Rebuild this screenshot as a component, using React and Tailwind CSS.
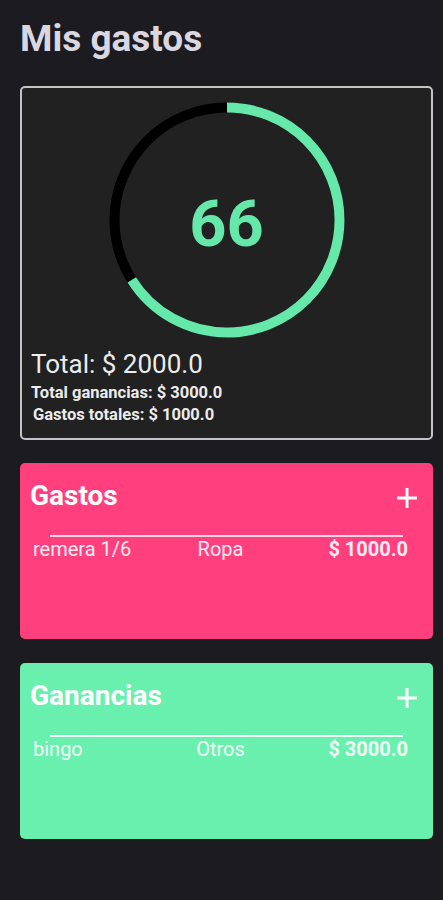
import React from "react";

const font = { fontFamily: "Roboto, 'Noto Sans', sans-serif" };

function Plus() {
  return (
    <svg width="22" height="22" viewBox="0 0 22 22" className="mt-[8px] shrink-0">
      <path d="M11 1 V21 M1 11 H21" stroke="white" strokeWidth="3" />
    </svg>
  );
}

function Ring({ value }) {
  const r = 112.5;
  const c = 2 * Math.PI * r;
  const len = (value / 100) * c;
  return (
    <div className="relative mx-auto w-[236px] h-[236px]">
      <svg width="236" height="236" viewBox="0 0 236 236">
        <circle cx="118" cy="118" r={r} fill="none" stroke="#000000" strokeWidth="10" />
        <circle
          cx="118"
          cy="118"
          r={r}
          fill="none"
          stroke="#65e8a9"
          strokeWidth="10"
          strokeDasharray={`${len} ${c}`}
          transform="rotate(-90 118 118)"
        />
      </svg>
      <div className="absolute inset-0 flex items-center justify-center">
        <span className="text-[65px] leading-none font-bold text-[#65e8a9] mt-[8px]">{value}</span>
      </div>
    </div>
  );
}

function ListCard({ title, bg, lineColor, items, className }) {
  return (
    <div className={`h-[176px] rounded-[5px] ${bg} ${className}`}>
      <div className="flex items-start justify-between pl-[10px] pr-[15px] pt-[16px]">
        <div className="text-[28px] leading-[33px] font-bold text-white">{title}</div>
        <Plus />
      </div>
      <div className={`mt-[23px] mx-[30px] h-[2px] ${lineColor}`} />
      {items.map((it, i) => (
        <div key={i} className="flex pl-[13px] pr-[25px] text-[20px] leading-[24px] text-white/90">
          <div className="flex-1 text-left">{it.name}</div>
          <div className="flex-1 text-center">{it.cat}</div>
          <div className="flex-1 text-right font-bold">{it.amount}</div>
        </div>
      ))}
    </div>
  );
}

export default function App() {
  return (
    <div style={font} className="min-h-[900px] bg-[#1c1b1f] pl-[20px] pr-[10px] pt-[17px]">
      <div className="text-[37px] leading-[44px] font-bold text-[#d9d7e0]">Mis gastos</div>

      <div className="mt-[25px] border-2 border-[#c4c4c4] rounded-[5px] bg-[#212121] pl-[9px] pr-[9px] pt-[14px] pb-[12px]">
        <Ring value={66} />
        <div className="mt-[11px] text-[26px] leading-[31px] text-[#ececec]">Total: $ 2000.0</div>
        <div className="mt-[2px] text-[16.5px] leading-[22px] font-bold text-[#ececec]">Total ganancias: $ 3000.0</div>
        <div className="ml-[2px] text-[16.5px] leading-[22px] font-bold text-[#ececec]">Gastos totales: $ 1000.0</div>
      </div>

      <ListCard
        className="mt-[23px]"
        title="Gastos"
        bg="bg-[#ff3f7e]"
        lineColor="bg-[#ffd6e4]"
        items={[{ name: "remera 1/6", cat: "Ropa", amount: "$ 1000.0" }]}
      />
      <ListCard
        className="mt-[24px]"
        title="Ganancias"
        bg="bg-[#69f0ae]"
        lineColor="bg-[#f0fff7]"
        items={[{ name: "bingo", cat: "Otros", amount: "$ 3000.0" }]}
      />
    </div>
  );
}
